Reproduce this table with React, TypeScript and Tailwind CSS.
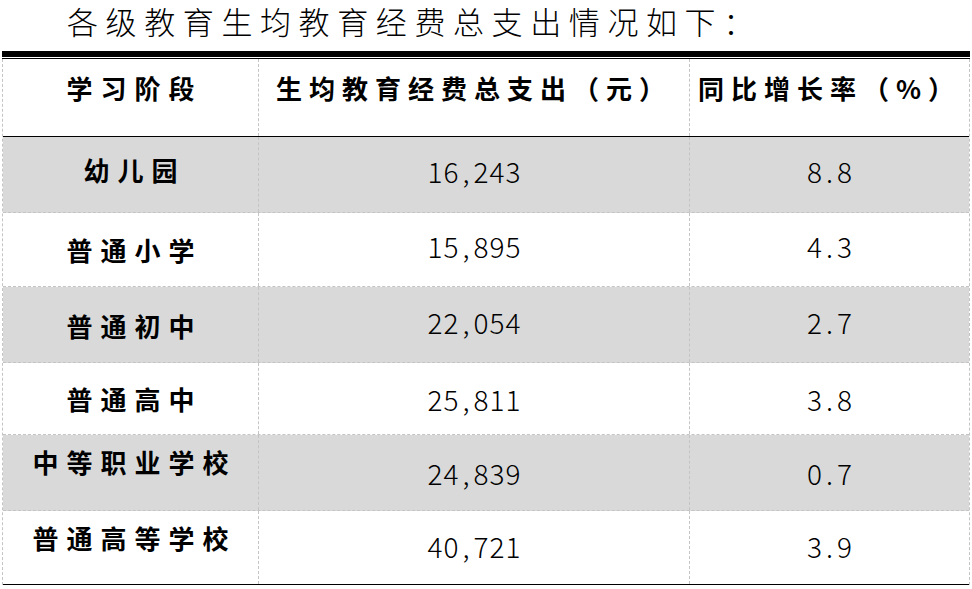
import React from "react";

const FONT = '"Noto Sans CJK SC", "Noto Sans", sans-serif';

type Row = {
  label: string;
  total: string;
  rate: string;
  rowCls: string;
  labelCls: string;
  numCls: string;
};

const rows: Row[] = [
  { label: "幼儿园", total: "16,243", rate: "8.8", rowCls: "h-[76px] bg-[#d9d9d9] border-b border-dashed border-b-[#c4c4c4]", labelCls: "pb-[10px]", numCls: "pb-[8px]" },
  { label: "普通小学", total: "15,895", rate: "4.3", rowCls: "h-[74px] bg-white border-b border-dashed border-b-[#c4c4c4]", labelCls: "pt-[1px]", numCls: "pb-[8px]" },
  { label: "普通初中", total: "22,054", rate: "2.7", rowCls: "h-[76px] bg-[#d9d9d9] border-b border-dashed border-b-[#c4c4c4]", labelCls: "pt-[3px]", numCls: "pb-[5px]" },
  { label: "普通高中", total: "25,811", rate: "3.8", rowCls: "h-[72px] bg-white border-b border-dashed border-b-[#c4c4c4]", labelCls: "pt-[1px]", numCls: "pt-[1px]" },
  { label: "中等职业学校", total: "24,839", rate: "0.7", rowCls: "h-[76px] bg-[#d9d9d9] border-b border-dashed border-b-[#c4c4c4]", labelCls: "pb-[21px]", numCls: "pt-[1px]" },
  { label: "普通高等学校", total: "40,721", rate: "3.9", rowCls: "h-[74px] bg-white border-b border-solid border-b-black", labelCls: "pb-[19px]", numCls: "pb-[4px]" },
];

function Num({ value }: { value: string }) {
  return (
    <span className="flex whitespace-nowrap text-[28px] leading-[40px] font-light text-black">
      {value.split("").map((ch, i) => (
        <span
          key={i}
          className={
            ch === "," || ch === "."
              ? "inline-block w-[14px] text-center"
              : "inline-block w-[16px] text-center"
          }
        >
          {ch}
        </span>
      ))}
    </span>
  );
}

export default function App() {
  return (
    <div
      className="w-[972px] h-[589px] bg-white overflow-hidden text-black"
      style={{ fontFamily: FONT }}
    >
      <div className="h-[51px] pl-[67px] text-[31px] leading-[41px] tracking-[7.6px] font-light whitespace-nowrap">
        各级教育生均教育经费总支出情况如下：
      </div>
      <div className="ml-[2px] w-[968px] h-[6px] bg-black" />
      <div className="ml-[2px] w-[968px] h-[2px] border-b border-black" />
      <div className="ml-[2px] w-[968px] border-x border-dashed border-x-[#c4c4c4]">
        <div className="flex h-[78px] border-b border-solid border-b-black">
          <div className="w-[255px] flex items-center justify-center pb-[20px]">
            <span className="text-[26px] leading-[36px] font-bold tracking-[8px] pl-[8px] whitespace-nowrap">
              学习阶段
            </span>
          </div>
          <div className="w-[431px] flex items-center justify-center pb-[20px] border-l border-dashed border-l-[#c4c4c4]">
            <span className="text-[26px] leading-[36px] font-bold tracking-[7px] whitespace-nowrap">
              生均教育经费总支出（元）
            </span>
          </div>
          <div className="flex-1 flex items-center justify-center pb-[20px] border-l border-dashed border-l-[#c4c4c4]">
            <span className="text-[26px] leading-[36px] font-bold tracking-[7px] whitespace-nowrap">
              同比增长率（%）
            </span>
          </div>
        </div>
        {rows.map((r) => (
          <div key={r.label} className={`flex ${r.rowCls}`}>
            <div className={`w-[255px] flex items-center justify-center ${r.labelCls}`}>
              <span className="text-[26px] leading-[36px] font-bold tracking-[8px] pl-[8px] whitespace-nowrap">
                {r.label}
              </span>
            </div>
            <div className={`w-[431px] flex items-center justify-center border-l border-dashed border-l-[#c4c4c4] ${r.numCls}`}>
              <Num value={r.total} />
            </div>
            <div className={`flex-1 flex items-center justify-center border-l border-dashed border-l-[#c4c4c4] ${r.numCls}`}>
              <Num value={r.rate} />
            </div>
          </div>
        ))}
      </div>
    </div>
  );
}
